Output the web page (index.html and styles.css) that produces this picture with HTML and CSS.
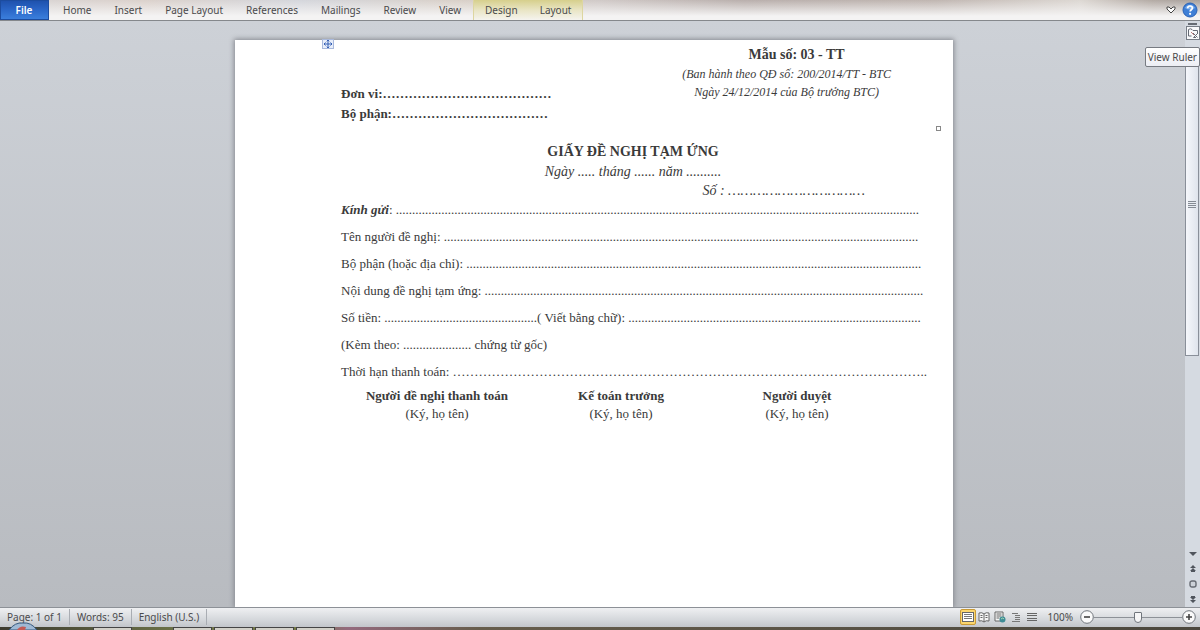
FILE: index.html
```html
<!DOCTYPE html>
<html lang="vi">
<head>
<meta charset="utf-8">
<title>Giấy đề nghị tạm ứng</title>
<link rel="stylesheet" href="styles.css">
</head>
<body>
<header class="ribbon">
  <button class="tab tab-file">File</button>
  <nav class="tabs" lang="en">
    <button class="tab">Home</button>
    <button class="tab">Insert</button>
    <button class="tab">Page Layout</button>
    <button class="tab">References</button>
    <button class="tab">Mailings</button>
    <button class="tab">Review</button>
    <button class="tab">View</button>
    <span class="context-tabs"><button class="tab">Design</button><button class="tab">Layout</button></span>
  </nav>
  <div class="ribbon-tools">
    <button class="icon-button" aria-label="Expand ribbon"><svg width="10" height="10" viewBox="0 0 10 10"><path d="M1 2h2L5 4l2-2h2v2L5 8 1 4z" fill="#fff" stroke="#444" stroke-width="1"/></svg></button>
    <button class="icon-button" aria-label="Help"><svg width="16" height="16" viewBox="0 0 16 16"><circle cx="8" cy="8" r="7" fill="#3f7fd6" stroke="#2b62b5"/><path d="M3 6a5.500 5 0 0 1 10 0q-5 3-10 0" fill="#7fb0ee"/><path d="M5.700 6.200C5.700 3.300 10.400 3.300 10.400 6c0 1.700-2.300 1.800-2.300 3.600" fill="none" stroke="#fff" stroke-width="1.700"/><circle cx="8.100" cy="11.800" r="1.100" fill="#fff"/></svg></button>
  </div>
</header>

<div class="workspace">
  <main class="canvas">
    <article class="page">
      <svg class="table-handle" width="12" height="10" viewBox="0 0 12 10"><rect x=".5" y=".5" width="11" height="9" fill="#e8eefa" stroke="#a9b9dc"/><path d="M2 5h8M6 1v8M3.500 3.500 2 5l1.500 1.500M8.500 3.500 10 5 8.500 6.500M4.700 2.300 6 1l1.300 1.300M4.700 7.700 6 9l1.300-1.300" fill="none" stroke="#3560b5"/></svg>
      <span class="table-corner"></span>
      <div class="doc-head">
        <div class="unit">
          <p>Đơn vi:…………………………………</p>
          <p>Bộ phận:………………………………</p>
        </div>
        <div class="form-ref">
          <p class="form-code">Mẫu số: 03 - TT</p>
          <p class="form-law">(Ban hành theo QĐ số: 200/2014/TT - BTC</p>
          <p class="form-law">Ngày 24/12/2014 của Bộ trưởng BTC)</p>
        </div>
      </div>
      <h1 class="doc-title">GIẤY ĐỀ NGHỊ TẠM ỨNG</h1>
      <p class="doc-date">Ngày ..... tháng ...... năm ..........</p>
      <p class="doc-number">Số : ……………………………</p>
      <div class="lines">
        <p><b><i>Kính gửi</i></b>: .................................................................................................................................................................</p>
        <p>Tên người đề nghị: ..................................................................................................................................................</p>
        <p>Bộ phận (hoặc địa chỉ): ............................................................................................................................................</p>
        <p>Nội dung đề nghị tạm ứng: .......................................................................................................................................</p>
        <p>Số tiền: ...............................................( Viết bằng chữ): ..........................................................................................</p>
        <p>(Kèm theo: ..................... chứng từ gốc)</p>
        <p>Thời hạn thanh toán: ………………………………………………………………………………………………..</p>
      </div>
      <div class="signatures">
        <div><p><b>Người đề nghị thanh toán</b></p><p>(Ký, họ tên)</p></div>
        <div><p><b>Kế toán trưởng</b></p><p>(Ký, họ tên)</p></div>
        <div><p><b>Người duyệt</b></p><p>(Ký, họ tên)</p></div>
      </div>
    </article>
  </main>
  <aside class="scrollbar" lang="en">
    <span class="splitter"></span>
    <button class="ruler-button" aria-label="View Ruler"><svg width="14" height="14" viewBox="0 0 14 14"><rect x=".5" y=".5" width="13" height="13" fill="#f8f9fb" stroke="#777d86"/><path d="M2.500 10V3.500q2-1.500 3.500 0L7 4.500h4.500V8M2.500 10h3M7 7l4.500 4.500M11 8l-3.500 3.500H10" fill="none" stroke="#666b75"/><path d="M5 6l3 3" stroke="#b77"/></svg></button>
    <div class="track"><div class="thumb"><span class="grip"></span></div></div>
    <div class="scroll-buttons">
      <button class="icon-button" aria-label="Scroll down"><svg width="10" height="8" viewBox="0 0 10 8"><path d="M1 2h8L5 6z" fill="#50555d"/></svg></button>
      <button class="icon-button" aria-label="Previous page"><svg width="8" height="8" viewBox="0 0 8 8"><path d="M4 0 7 3H1zM4 3l3 3H1zM2 6h4v1H2z" fill="#50555d"/></svg></button>
      <button class="icon-button" aria-label="Browse object"><svg width="8" height="8" viewBox="0 0 8 8"><rect x="1" y="1" width="6" height="6" rx="2" fill="#ccd1d8" stroke="#666b73" stroke-width="1.400"/></svg></button>
      <button class="icon-button" aria-label="Next page"><svg width="8" height="8" viewBox="0 0 8 8"><path d="M2 1h4v1H2zM1 2h6L4 5zM1 5h6L4 8z" fill="#50555d"/></svg></button>
    </div>
    <div class="tooltip" role="tooltip">View Ruler</div>
  </aside>
</div>

<footer class="status" lang="en">
  <span class="status-item">Page: 1 of 1</span>
  <span class="status-item">Words: 95</span>
  <span class="status-item">English (U.S.)</span>
  <div class="views">
    <button class="view-button active" aria-label="Print layout"><svg width="12" height="12" viewBox="0 0 12 12"><rect x=".5" y="1.500" width="11" height="9" fill="#fff" stroke="#666"/><path d="M2 3.500h8M2 5.500h8M2 7.500h8" stroke="#777"/></svg></button>
    <button class="view-button" aria-label="Full screen reading"><svg width="12" height="12" viewBox="0 0 12 12"><path d="M1 2q3-1 5 1 2-2 5-1v8q-3-1-5 1-2-2-5-1zM6 3v8M2.500 4.500h2M2.500 6.500h2M7.500 4.500h2M7.500 6.500h2" fill="#f5f5f5" stroke="#666"/></svg></button>
    <button class="view-button" aria-label="Web layout"><svg width="12" height="12" viewBox="0 0 12 12"><path d="M1 1h8v9H1zM2.500 3h5M2.500 5h5M2.500 7h3" fill="#f5f5f5" stroke="#666"/><circle cx="8.500" cy="8.500" r="3" fill="#3e8c96"/><path d="M7 8q2-2 3 0" stroke="#a7dbb4" fill="none"/></svg></button>
    <button class="view-button" aria-label="Outline"><svg width="12" height="12" viewBox="0 0 12 12"><path d="M2 2.500h6M5 4.500h5M5 6.500h5M5 8.500h5M2 10.500h8" stroke="#777"/></svg></button>
    <button class="view-button" aria-label="Draft"><svg width="12" height="12" viewBox="0 0 12 12"><path d="M1 2.500h10M1 4.500h10M1 7.500h10M1 9.500h10" stroke="#666"/></svg></button>
  </div>
  <span class="zoom-level">100%</span>
  <div class="zoom">
    <button class="icon-button" aria-label="Zoom out"><svg width="14" height="14" viewBox="0 0 14 14"><circle cx="7" cy="7" r="6.300" fill="#fafafa" stroke="#70757c"/><path d="M4 7h6" stroke="#444" stroke-width="1.600"/></svg></button>
    <input class="zoom-slider" type="range" min="0" max="100" value="50" aria-label="Zoom">
    <button class="icon-button" aria-label="Zoom in"><svg width="14" height="14" viewBox="0 0 14 14"><circle cx="7" cy="7" r="6.300" fill="#fafafa" stroke="#70757c"/><path d="M4 7h6M7 4v6" stroke="#444" stroke-width="1.600"/></svg></button>
  </div>
</footer>
<div class="taskbar">
  <svg class="orb" width="30" height="8" viewBox="0 0 30 8"><path d="M1 8Q7 0 15 1q8-1 14 7z" fill="#9fb9d4" stroke="#34587e"/><path d="M9 8q3-5 9-3l-1 3z" fill="#c45a55"/></svg>
  <span class="task"></span><span class="task task-later"></span><span class="task"></span><span class="task"></span><span class="task"></span>
</div>
</body>
</html>
```
FILE: styles.css
```css
* { box-sizing: border-box; }

body {
  margin: 0;
  height: 100vh;
  display: flex;
  flex-direction: column;
  overflow: hidden;
  font: 10px/14px "Noto Sans", "Open Sans", sans-serif;
  color: #4a4a4c;
}

p, h1 { margin: 0; }

button {
  font: inherit;
  color: inherit;
  border: 0;
  padding: 0;
  background: none;
}

svg { display: block; }

/* Ribbon */
.ribbon {
  display: flex;
  flex: none;
  height: 21px;
  border-bottom: 1px solid #85888c;
  background:
    linear-gradient(#fff0, #f4f3f3 80%),
    linear-gradient(90deg, #d8d5d6, #dbd1cb 12%, #d4d6dc 25%, #d9d0c8 38%, #d0c9c7 50%, #b9afac 62%, #c0b6b1 78%, #ddd8d3 90%, #b3aaa4 96%, #a8a09c);
}

.tabs { display: flex; padding-left: 3px; }
.tab { padding: 0 12px 1px 11px; }

.tab-file {
  width: 49px;
  color: #fff;
  font-weight: 600;
  background: linear-gradient(#1f52ae, #2b67c8 50%, #3b7fdc);
  border: 1px solid #1c4c9f;
}

.context-tabs {
  display: flex;
  border: solid #ddd6a0;
  border-width: 0 1px;
  background: linear-gradient(#d6cf8c, #e9e5c4 50%, #f5f4ef);
}
.context-tabs .tab { padding: 0 11px 1px; }

.ribbon-tools {
  display: flex;
  align-items: center;
  gap: 6px;
  margin-left: auto;
  padding-right: 2px;
}

/* Document area */
.workspace {
  flex: 1;
  min-height: 0;
  display: flex;
  background: linear-gradient(#cdd1d7, #b8bbc0);
}

.canvas {
  flex: 1;
  min-width: 0;
  display: flex;
  justify-content: center;
  padding: 19px 0 0 3px;
  overflow: hidden;
}

.page {
  position: relative;
  flex: 0 1 718px;
  min-width: 0;
  padding: 5px 28px 0 106px;
  background: #fff;
  box-shadow: 0 0 5px 1px #85888e;
  font: 13px/20px "Liberation Serif", "Times New Roman", serif;
  color: #3a3a3a;
}

.table-handle { position: absolute; left: 87px; top: -1px; }

.table-corner {
  position: absolute;
  right: 12px;
  top: 86px;
  width: 5px;
  height: 5px;
  border: 1px solid #888;
}

.doc-head {
  display: flex;
  justify-content: space-between;
  align-items: flex-end;
}
.unit { font-weight: bold; }
.form-ref { padding: 0 34px 23px 0; text-align: center; }
.form-code { padding-left: 20px; font-size: 14px; font-weight: bold; }
.form-law { font-size: 12px; line-height: 18px; font-style: italic; }

.doc-title {
  padding-top: 18px;
  text-align: center;
  font-size: 14px;
  line-height: 20px;
}
.doc-date { font-size: 14px; text-align: center; font-style: italic; }
.doc-number {
  padding-right: 60px;
  font-size: 14px;
  line-height: 18px;
  text-align: right;
  font-style: italic;
}

.lines {
  display: flex;
  flex-direction: column;
  gap: 7px;
  white-space: nowrap;
}

.signatures {
  display: grid;
  grid-template-columns: 192px 176px 176px;
  line-height: 18px;
  padding-top: 5px;
  text-align: center;
}

/* Scrollbar */
.scrollbar {
  position: relative;
  flex: none;
  width: 15px;
  display: flex;
  flex-direction: column;
  align-items: center;
  background: #d5dae1;
}
.splitter { width: 9px; height: 2px; margin: 2px 0 1px; background: #666b73; }
.track { flex: 1; width: 100%; padding-top: 12px; }
.thumb {
  height: 304px;
  margin-right: 1px;
  display: grid;
  place-items: center;
  border: 1px solid #898f99;
  background: linear-gradient(90deg, #f5f7fb, #dfe4ec);
}
.grip {
  width: 8px;
  height: 7px;
  background: repeating-linear-gradient(#858b94 0 1px, #e8ecf2 1px 2px);
}
.scroll-buttons {
  display: flex;
  flex-direction: column;
  align-items: center;
  gap: 7px;
  padding-bottom: 4px;
}

.tooltip {
  position: absolute;
  right: 0;
  top: 26px;
  padding: 1px 2px;
  border: 1px solid #777b82;
  border-radius: 2px;
  background: linear-gradient(#fff, #eceef4);
  line-height: 16px;
  white-space: nowrap;
}

/* Status bar */
.status {
  flex: none;
  display: flex;
  align-items: center;
  height: 20px;
  padding-bottom: 1px;
  border-top: 1px solid #8d9197;
  background: linear-gradient(#eff0f2, #d5d8dc 60%, #c2c5ca);
}
.status-item { padding: 1px 7px; border-right: 1px solid #a9adb3; }
.views { display: flex; margin-left: auto; }
.view-button {
  width: 16px;
  height: 16px;
  display: grid;
  place-items: center;
}
.active {
  border: 1px solid #c99a35;
  border-radius: 2px;
  background: #fbd66e;
}
.zoom-level { padding: 0 7px 0 8px; }
.zoom { display: flex; align-items: center; padding-right: 4px; }

.zoom-slider {
  appearance: none;
  width: 88px;
  height: 14px;
  margin: 0;
  background: linear-gradient(#8d9197, #8d9197) center / 100% 1px no-repeat;
}
.zoom-slider::-webkit-slider-thumb {
  appearance: none;
  width: 8px;
  height: 11px;
  border: 1px solid #70757c;
  border-radius: 1px 1px 4px 4px;
  background: #f6f6f7;
}

/* Taskbar edge */
.taskbar {
  position: relative;
  flex: none;
  display: flex;
  gap: 2px;
  height: 3px;
  padding-left: 93px;
  background: linear-gradient(90deg, #3c3b30, #6d7348 15%, #747a45 25%, #946a7d 29%, #665d4c 40%, #4b473d);
}
.orb { position: absolute; left: 8px; bottom: 0; }
.task { width: 39px; background: #d2d0c8; border: solid #444; border-width: 1px 1px 0; }
.task-later { margin-left: 39px; }
```
